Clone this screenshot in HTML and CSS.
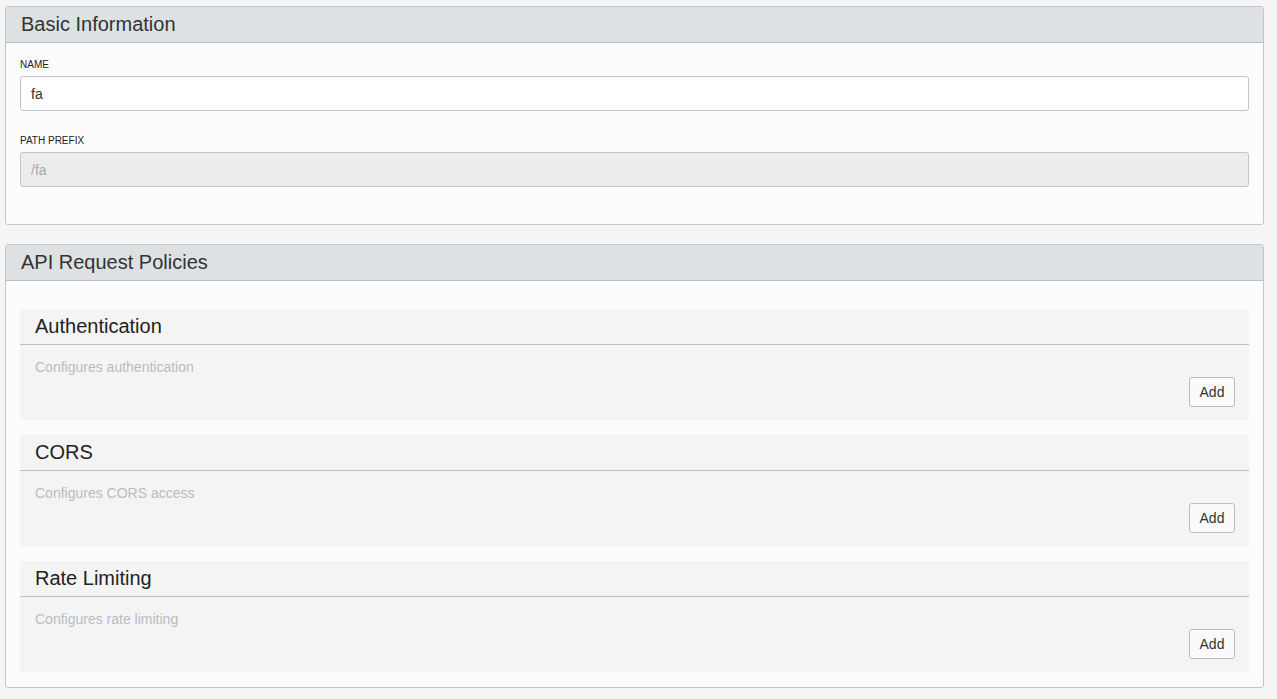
FILE: index.html
```html
<!DOCTYPE html>
<html>
<head>
<meta charset="utf-8">
<link rel="stylesheet" href="styles.css">
</head>
<body>
<div class="page">
  <section class="panel">
    <div class="panel-head">Basic Information</div>
    <div class="panel-body basic">
      <div class="group">
        <label class="lbl">NAME</label>
        <input class="field" type="text" value="fa">
      </div>
      <div class="group">
        <label class="lbl">PATH PREFIX</label>
        <input class="field disabled" type="text" value="/fa" disabled>
      </div>
    </div>
  </section>

  <section class="panel">
    <div class="panel-head">API Request Policies</div>
    <div class="panel-body policies">
      <div class="card">
        <div class="card-head">Authentication</div>
        <div class="card-body">
          <div class="desc">Configures authentication</div>
          <div class="actions"><button class="btn">Add</button></div>
        </div>
      </div>
      <div class="card">
        <div class="card-head">CORS</div>
        <div class="card-body">
          <div class="desc">Configures CORS access</div>
          <div class="actions"><button class="btn">Add</button></div>
        </div>
      </div>
      <div class="card">
        <div class="card-head">Rate Limiting</div>
        <div class="card-body">
          <div class="desc">Configures rate limiting</div>
          <div class="actions"><button class="btn">Add</button></div>
        </div>
      </div>
    </div>
  </section>
</div>
</body>
</html>
```

FILE: styles.css
```css
* { box-sizing: border-box; }
html, body {
  margin: 0;
  padding: 0;
  background: #f5f5f5;
  font-family: "Liberation Sans", Arial, sans-serif;
  color: #333;
}
.page {
  padding: 6px 13px 0 5px;
  display: flex;
  flex-direction: column;
  gap: 19px;
}
.panel {
  background: #fcfcfc;
  border: 1px solid #c2c5cc;
  border-radius: 3px;
}
.panel-head {
  background: #dee1e4;
  border-bottom: 1px solid #b9bdc6;
  height: 36px;
  padding: 0 15px;
  font-size: 20px;
  line-height: 35px;
  color: #333;
  border-radius: 2px 2px 0 0;
}
.panel-body.basic {
  padding: 15px 14px 14px 14px;
}
.group {
  display: flex;
  flex-direction: column;
  margin-bottom: 23px;
}
.lbl {
  font-size: 10px;
  line-height: 14px;
  margin-bottom: 4px;
  color: #222;
}
.field {
  height: 35px;
  border: 1px solid #c2c5d0;
  border-radius: 3px;
  background: #fff;
  padding: 0 10px;
  font-family: "Liberation Sans", Arial, sans-serif;
  font-size: 14px;
  color: #333;
}
.field.disabled {
  background: #ececec;
  color: #aaaaaa;
}
.panel-body.policies {
  padding: 28px 14px 15px 14px;
  display: flex;
  flex-direction: column;
  gap: 15px;
}
.card {
  background: #f4f4f4;
  border-radius: 2px;
}
.card-head {
  height: 36px;
  border-bottom: 1px solid #b9bdca;
  padding: 0 15px;
  font-size: 20px;
  line-height: 35px;
  color: #222;
}
.card-body {
  padding: 12px 14px 13px 15px;
}
.desc {
  font-size: 14px;
  line-height: 20px;
  color: #b8bcc5;
}
.actions {
  display: flex;
  justify-content: flex-end;
}
.btn {
  width: 46px;
  height: 30px;
  background: #fafafa;
  border: 1px solid #b9bdc6;
  border-radius: 3px;
  font-family: "Liberation Sans", Arial, sans-serif;
  font-size: 14px;
  color: #333;
  padding: 0;
}
```
